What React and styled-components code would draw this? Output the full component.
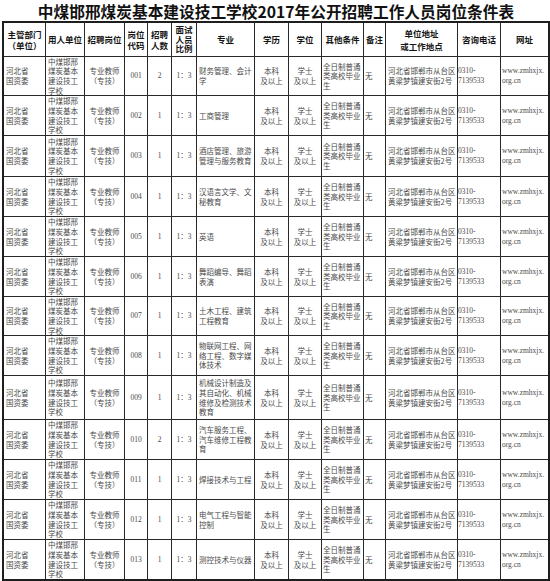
import React from "react";
import styled, { createGlobalStyle } from "styled-components";

const GlobalStyle = createGlobalStyle`
  html, body { margin: 0; padding: 0; background: #ffffff; }
  body { font-family: "Noto Sans CJK SC", "Noto Sans", sans-serif; }
`;

const COLS = [42, 39, 40, 23, 24, 25, 58, 34, 33, 42, 22, 72, 43, 47];

const Page = styled.div`
  width: 550px;
  height: 581px;
  overflow: hidden;
  background: #fff;
`;

const Title = styled.h1`
  margin: 0;
  padding: 2px 0 0 2px;
  line-height: 19px;
  text-align: center;
  font-family: "Noto Sans CJK SC", sans-serif;
  font-weight: 700;
  font-size: 15.7px;
  color: #111;
  white-space: nowrap;
`;

const Table = styled.div`
  width: fit-content;
  margin-left: 2px;
  border: 2px solid #1e1e1e;
  display: flex;
  flex-direction: column;
`;

const Row = styled.div`
  display: grid;
  grid-template-columns: ${COLS.map((c) => c + "px").join(" ")};
  height: ${(p) => p.$h}px;
  &:last-child > div { border-bottom: none; }
`;

const Cell = styled.div`
  box-sizing: border-box;
  border-right: 1px solid #2a2a2a;
  border-bottom: 1px solid #2a2a2a;
  &:last-child { border-right: none; }
  display: flex;
  align-items: center;
  justify-content: ${(p) => (p.$align === "center" ? "center" : "flex-start")};
  text-align: ${(p) => (p.$align === "center" ? "center" : "left")};
  white-space: pre;
  padding: 0 0 0 ${(p) => (p.$pad !== undefined ? p.$pad : 2)}px;
  font-family: ${(p) => (p.$latin ? '"Liberation Serif", "Noto Sans CJK SC", serif' : '"Noto Sans CJK SC", sans-serif')};
  font-size: 7.5px;
  line-height: 9.6px;
  color: #4a4a4a;
  overflow: hidden;
`;

const HeadCell = styled(Cell)`
  font-family: "Noto Sans CJK SC", sans-serif;
  font-weight: 700;
  font-size: 8.5px;
  line-height: ${(p) => p.$lh || 11}px;
  color: #151515;
  justify-content: center;
  text-align: center;
  padding: 0;
`;

const HEAD = [
  { t: "主管部门\n（单位）" },
  { t: "用人单位" },
  { t: "招聘岗位" },
  { t: "岗位\n代码" },
  { t: "招聘\n人数" },
  { t: "面试\n人员\n比例", lh: 9.8 },
  { t: "专业" },
  { t: "学历" },
  { t: "学位" },
  { t: "其他条件" },
  { t: "备注" },
  { t: "单位地址\n或工作地点", lh: 12.5 },
  { t: "咨询电话" },
  { t: "网址" },
];

const ROWS = [
  { code: "001", n: "2", major: "财务管理、会计\n学", h: 39 },
  { code: "002", n: "1", major: "工商管理", h: 40 },
  { code: "003", n: "1", major: "酒店管理、旅游\n管理与服务教育", h: 41 },
  { code: "004", n: "1", major: "汉语言文学、文\n秘教育", h: 40 },
  { code: "005", n: "1", major: "英语", h: 40 },
  { code: "006", n: "1", major: "舞蹈编导、舞蹈\n表演", h: 40 },
  { code: "007", n: "1", major: "土木工程、建筑\n工程教育", h: 39 },
  { code: "008", n: "1", major: "物联网工程、网\n络工程、数字媒\n体技术", h: 40 },
  { code: "009", n: "1", major: "机械设计制造及\n其自动化、机械\n维修及检测技术\n教育", h: 44 },
  { code: "010", n: "2", major: "汽车服务工程、\n汽车维修工程教\n育", h: 40 },
  { code: "011", n: "1", major: "焊接技术与工程", h: 40 },
  { code: "012", n: "1", major: "电气工程与智能\n控制", h: 40 },
  { code: "013", n: "1", major: "测控技术与仪器", h: 39 },
];

export default function App() {
  return (
    <Page>
      <GlobalStyle />
      <Title>中煤邯邢煤炭基本建设技工学校2017年公开招聘工作人员岗位条件表</Title>
      <Table>
        <Row $h={34}>
          {HEAD.map((h, i) => (
            <HeadCell key={i} $lh={h.lh}>{h.t}</HeadCell>
          ))}
        </Row>
        {ROWS.map((r) => (
          <Row key={r.code} $h={r.h}>
            <Cell>{"河北省\n国资委"}</Cell>
            <Cell>{"中煤邯邢\n煤炭基本\n建设技工\n学校"}</Cell>
            <Cell $align="center" $pad={0}>{"专业教师\n（专技）"}</Cell>
            <Cell $align="center" $pad={0} $latin>{r.code}</Cell>
            <Cell $align="center" $pad={0} $latin>{r.n}</Cell>
            <Cell $align="center" $pad={0} $latin>1：3</Cell>
            <Cell>{r.major}</Cell>
            <Cell $align="center" $pad={0}>{"本科\n及以上"}</Cell>
            <Cell $align="center" $pad={0}>{"学士\n及以上"}</Cell>
            <Cell $pad={1}>{"全日制普通\n类高校毕业\n生"}</Cell>
            <Cell $pad={1}>无</Cell>
            <Cell $pad={2}>{"河北省邯郸市从台区\n黄粱梦镇建安街2号"}</Cell>
            <Cell $pad={0} $latin>{"0310-\n7139533"}</Cell>
            <Cell $pad={1} $latin>{"www.zmhxjx.\norg.cn"}</Cell>
          </Row>
        ))}
      </Table>
    </Page>
  );
}
